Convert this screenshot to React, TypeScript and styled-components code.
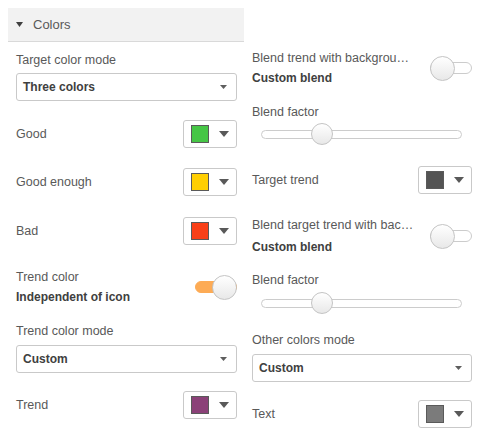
import React from "react";
import styled, { createGlobalStyle } from "styled-components";

const Global = createGlobalStyle`
  html, body { margin: 0; padding: 0; background: #ffffff; }
  body { font-family: "Liberation Sans", Arial, sans-serif; }
`;

const Page = styled.div`
  display: flex;
  padding: 8px 0 0 8px;
  width: 480px;
  box-sizing: border-box;
`;

const Column = styled.div<{ $pt?: number }>`
  width: 236px;
  display: flex;
  flex-direction: column;
  padding-top: ${(p) => p.$pt ?? 0}px;
`;

const SectionHeader = styled.div`
  height: 33px;
  background: #f2f2f2;
  border-bottom: 1px solid #d9d9d9;
  display: flex;
  align-items: center;
  padding-left: 8px;
  gap: 10px;
  font-size: 13px;
  color: #595959;
`;

const Body = styled.div<{ $pl: number; $pr: number }>`
  display: flex;
  flex-direction: column;
  padding: 0 ${(p) => p.$pr}px 0 ${(p) => p.$pl}px;
`;

const Label = styled.div<{ $mt?: number }>`
  margin-top: ${(p) => p.$mt ?? 0}px;
  font-size: 12.5px;
  line-height: 16px;
  color: #595959;
  white-space: nowrap;
`;

const SelectBox = styled.div<{ $mt?: number }>`
  margin-top: ${(p) => p.$mt ?? 0}px;
  height: 28px;
  box-sizing: border-box;
  border: 1px solid #c9c9c9;
  border-radius: 3px;
  display: flex;
  align-items: center;
  justify-content: space-between;
  padding: 0 9px 0 6px;
  background: #fff;
`;

const SelectValue = styled.span`
  font-size: 12px;
  font-weight: bold;
  color: #404040;
`;

const Row = styled.div<{ $mt?: number }>`
  margin-top: ${(p) => p.$mt ?? 0}px;
  display: flex;
  align-items: center;
  justify-content: space-between;
`;

const PickerButton = styled.div`
  width: 54px;
  height: 28px;
  box-sizing: border-box;
  border: 1px solid #c9c9c9;
  border-radius: 3px;
  display: flex;
  align-items: center;
  padding-left: 7px;
  gap: 10px;
  background: #fff;
`;

const Swatch = styled.div<{ $color: string }>`
  width: 18px;
  height: 18px;
  box-sizing: border-box;
  background: ${(p) => p.$color};
  border: 1px solid #5a5a5a;
`;

const ToggleText = styled.div<{ $gap: number }>`
  display: flex;
  flex-direction: column;
  gap: ${(p) => p.$gap}px;
`;

const ToggleLabel = styled.div`
  font-size: 12.5px;
  line-height: 20px;
  color: #595959;
  white-space: nowrap;
`;

const ToggleValue = styled.div`
  font-size: 12px;
  line-height: 20px;
  font-weight: bold;
  color: #404040;
  white-space: nowrap;
`;

const Toggle = styled.div`
  position: relative;
  width: 42px;
  height: 25px;
  flex-shrink: 0;
`;

const ToggleTrack = styled.div<{ $on: boolean }>`
  position: absolute;
  left: 0;
  right: 0;
  top: 6.5px;
  height: 12px;
  box-sizing: border-box;
  border-radius: 6px;
  background: ${(p) => (p.$on ? "#fdab55" : "#ffffff")};
  border: 1px solid ${(p) => (p.$on ? "#fdab55" : "#cccccc")};
`;

const Knob = styled.div<{ $on?: boolean; $size: number }>`
  position: absolute;
  top: 0;
  ${(p) => (p.$on ? "right: 0;" : "left: 0;")}
  width: ${(p) => p.$size}px;
  height: ${(p) => p.$size}px;
  box-sizing: border-box;
  border-radius: 50%;
  border: 1px solid #c4c4c4;
  background: linear-gradient(#ffffff, #e8e8e8);
`;

const SliderWrap = styled.div<{ $mt?: number }>`
  margin-top: ${(p) => p.$mt ?? 0}px;
  height: 22px;
  padding: 0 10px 0 9px;
  display: flex;
  align-items: center;
`;

const SliderTrack = styled.div`
  position: relative;
  flex: 1;
  height: 9px;
  box-sizing: border-box;
  border: 1px solid #cccccc;
  border-radius: 5px;
  background: #fff;
`;

const SliderKnob = styled(Knob)`
  top: -7.5px;
`;

const SelectArrow = () => (
  <svg width="7" height="4" viewBox="0 0 7 4">
    <path d="M0 0 L7 0 L3.5 4 Z" fill="#5e5e5e" />
  </svg>
);

const PickerArrow = () => (
  <svg width="10" height="6" viewBox="0 0 10 6">
    <path d="M0 0 L10 0 L5 6 Z" fill="#595959" />
  </svg>
);

const HeaderArrow = () => (
  <svg width="7" height="5" viewBox="0 0 7 5">
    <path d="M0 0 L7 0 L3.5 5 Z" fill="#404040" />
  </svg>
);

const Select = ({ value, mt }: { value: string; mt?: number }) => (
  <SelectBox $mt={mt}>
    <SelectValue>{value}</SelectValue>
    <SelectArrow />
  </SelectBox>
);

const ColorRow = ({ label, color, mt }: { label: string; color: string; mt?: number }) => (
  <Row $mt={mt}>
    <Label>{label}</Label>
    <PickerButton>
      <Swatch $color={color} />
      <PickerArrow />
    </PickerButton>
  </Row>
);

const ToggleRow = ({
  label,
  value,
  on,
  mt,
  gap = 0,
}: {
  label: string;
  value: string;
  on: boolean;
  mt?: number;
  gap?: number;
}) => (
  <Row $mt={mt}>
    <ToggleText $gap={gap}>
      <ToggleLabel>{label}</ToggleLabel>
      <ToggleValue>{value}</ToggleValue>
    </ToggleText>
    <Toggle>
      <ToggleTrack $on={on} />
      <Knob $on={on} $size={25} />
    </Toggle>
  </Row>
);

const Slider = ({ mt, pos }: { mt?: number; pos: number }) => (
  <SliderWrap $mt={mt}>
    <SliderTrack>
      <SliderKnob $size={22} style={{ left: pos }} />
    </SliderTrack>
  </SliderWrap>
);

export default function App() {
  return (
    <>
      <Global />
      <Page>
        <Column>
          <SectionHeader>
            <HeaderArrow />
            <span>Colors</span>
          </SectionHeader>
          <Body $pl={8} $pr={7}>
            <Label $mt={10}>Target color mode</Label>
            <Select mt={5} value="Three colors" />
            <ColorRow mt={19} label="Good" color="#46c646" />
            <ColorRow mt={20} label="Good enough" color="#ffcf02" />
            <ColorRow mt={21} label="Bad" color="#f93f17" />
            <ToggleRow mt={22} label="Trend color" value="Independent of icon" on />
            <Label $mt={16}>Trend color mode</Label>
            <Select mt={6} value="Custom" />
            <ColorRow mt={18} label="Trend" color="#8b4178" />
          </Body>
        </Column>
        <Column $pt={40}>
          <Body $pl={8} $pr={8}>
            <ToggleRow label="Blend trend with backgrou…" value="Custom blend" on={false} />
            <Label $mt={16}>Blend factor</Label>
            <Slider mt={3} pos={49} />
            <ColorRow mt={21} label="Target trend" color="#545454" />
            <ToggleRow
              mt={21}
              gap={2}
              label="Blend target trend with bac…"
              value="Custom blend"
              on={false}
            />
            <Label $mt={15}>Blend factor</Label>
            <Slider mt={4} pos={49} />
            <Label $mt={18}>Other colors mode</Label>
            <Select mt={6} value="Custom" />
            <ColorRow mt={18} label="Text" color="#7b7b7b" />
          </Body>
        </Column>
      </Page>
    </>
  );
}
